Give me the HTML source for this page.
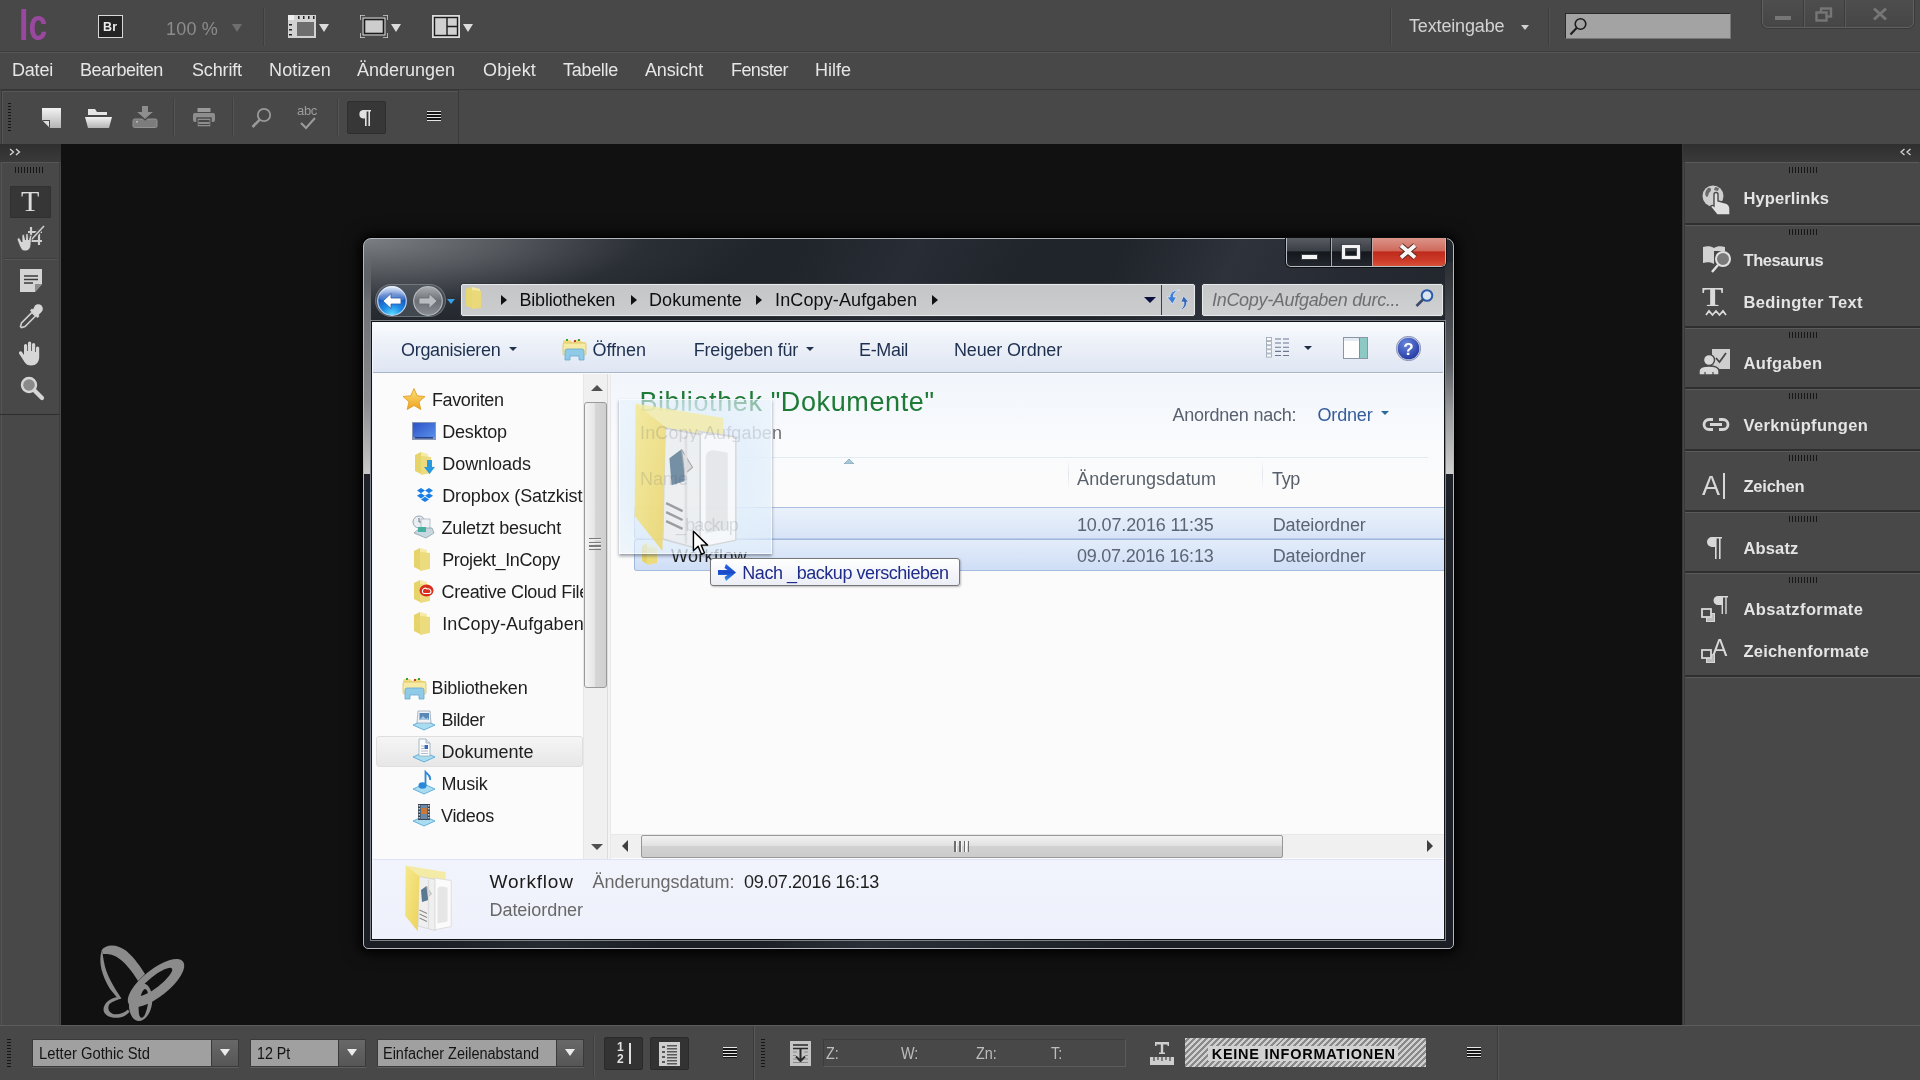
<!DOCTYPE html>
<html lang="de">
<head>
<meta charset="utf-8">
<title>InCopy</title>
<style>
*{box-sizing:border-box;margin:0;padding:0}
html,body{width:1920px;height:1080px;overflow:hidden;background:#111;font-family:"Liberation Sans","DejaVu Sans",sans-serif}
.abs,.abs *{position:absolute}
#app{position:absolute;left:0;top:0;width:1920px;height:1080px;overflow:hidden;will-change:transform}
#app div,#app span,#app svg{position:absolute}
.t{white-space:nowrap;line-height:1}
/* top bars */
#topbar{left:0;top:0;width:1920px;height:52px;background:#484848;border-bottom:1px solid #3c3c3c}
#menubar{left:0;top:52px;width:1920px;height:38px;background:#484848;border-top:1px solid #565656;border-bottom:1px solid #373737}
#toolbar{left:0;top:90px;width:1920px;height:54px;background:#484848}
.menu{top:8px;font-size:18px;color:#e6e6e6;letter-spacing:-0.2px}
.tri{width:0;height:0;border-style:solid;border-width:8px 5.5px 0 5.5px;border-color:#dcdcdc transparent transparent transparent}
.vsep{top:8px;width:2px;height:38px;background:#3f3f3f;border-right:1px solid #555}
/* left tools */
#ltools{left:0;top:144px;width:61px;height:881px;background:#484848}
/* right panels */
#rpanel{left:1683px;top:144px;width:237px;height:881px;background:#484848}
.plabel{font-size:16.5px;font-weight:bold;color:#e4e4e4;left:60.5px}
.grip{width:28px;height:6px;background:repeating-linear-gradient(90deg,#161616 0 1px,transparent 1px 3px)}
.psep{left:2px;width:235px;height:3px;background:#2f2f2f;border-bottom:1px solid #5a5a5a}
/* bottom bar */
#bottombar{left:0;top:1025px;width:1920px;height:55px;background:#484848;border-top:1px solid #5c5c5c}
.dd{top:13px;height:28px;background:#a0a0a0;border:1px solid #3a3a3a;box-shadow:0 1px 0 #5e5e5e}
.ddb{top:14px;width:27px;height:26px;background:linear-gradient(#686868,#565656);border-left:1px solid #3a3a3a}
.tri2{top:23px;width:0;height:0;border-style:solid;border-width:7.5px 5.75px 0 5.75px;border-color:#ececec transparent transparent transparent}
.ddt{top:20px;font-size:16px;color:#141414;transform-origin:0 0}
.inf{top:20px;font-size:16px;color:#bdbdbd;transform-origin:0 0;transform:scaleX(.9)}
/* explorer */
#win{left:363px;top:238px;width:1091px;height:711px;border-radius:8px 8px 3px 3px;background:#1b1e24;box-shadow:0 0 0 1px #0a0a0a, 0 0 18px 2px rgba(0,0,0,.8)}
.wtxt{font-size:17px;color:#1e1e1e}
</style>
</head>
<body>
<div id="app">

<!-- TOPBAR -->
<div id="topbar">
  <span class="t" style="left:19px;top:2px;font-size:45px;font-weight:bold;color:#9a479f;transform:scaleX(.75);transform-origin:0 0;letter-spacing:0px">Ic</span>
  <div style="left:98px;top:15px;width:25px;height:23px;border:1.5px solid #d8d8d8;background:#242424"></div>
  <span class="t" style="left:103px;top:20px;font-size:13.5px;font-weight:bold;color:#ececec;letter-spacing:.4px;transform:scaleX(.92);transform-origin:0 0">Br</span>
  <span class="t" style="left:166px;top:20px;font-size:18px;color:#8c8c8c;letter-spacing:.2px">100 %</span>
  <div class="tri" style="left:232px;top:24px;border-top-color:#6e6e6e"></div>
  <div style="left:263px;top:8px;width:1px;height:38px;background:#3e3e3e;border-right:1px solid #525252;width:2px"></div>
  <!-- view options icon -->
  <svg style="left:288px;top:15px" width="28" height="23" viewBox="0 0 28 23"><rect x="0" y="0" width="28" height="23" fill="#d2d2d2"/><rect x="9" y="7" width="17" height="14" fill="#6e6e6e"/><rect x="0" y="0" width="6" height="5" fill="#eee"/><g fill="#222"><rect x="10" y="1" width="1.5" height="3"/><rect x="15" y="1" width="1.5" height="3"/><rect x="20" y="1" width="1.5" height="3"/><rect x="25" y="1" width="1.5" height="3"/><rect x="1" y="9" width="3" height="1.5"/><rect x="1" y="14" width="3" height="1.5"/><rect x="1" y="19" width="3" height="1.5"/></g></svg>
  <div class="tri" style="left:319px;top:24px"></div>
  <!-- screen mode icon -->
  <svg style="left:360px;top:15px" width="28" height="23" viewBox="0 0 28 23"><path d="M0 5V0H5M23 0H28V5M28 18V23H23M5 23H0V18" fill="none" stroke="#cfcfcf" stroke-width="1.6"/><rect x="4.5" y="4.5" width="19" height="14" fill="#cdcdcd" stroke="#1c1c1c" stroke-width="1.6"/><rect x="3" y="3" width="22" height="17" fill="none" stroke="#d8d8d8" stroke-width="1"/></svg>
  <div class="tri" style="left:391px;top:24px"></div>
  <!-- arrange icon -->
  <svg style="left:432px;top:15px" width="28" height="23" viewBox="0 0 28 23"><rect x="0.5" y="0.5" width="27" height="22" fill="#d6d6d6" stroke="#dcdcdc"/><rect x="2.5" y="2.5" width="23" height="18" fill="#d0d0d0" stroke="#1c1c1c" stroke-width="1.4"/><path d="M15 2.5V20.5M15 11.5H25.5" stroke="#1c1c1c" stroke-width="1.4"/></svg>
  <div class="tri" style="left:463px;top:24px"></div>
  <!-- workspace -->
  <div style="left:1390px;top:8px;width:2px;height:38px;background:#3e3e3e;border-right:1px solid #525252"></div>
  <span class="t" style="left:1409px;top:17px;font-size:18px;color:#d2d2d2;letter-spacing:-.15px">Texteingabe</span>
  <div class="tri" style="left:1521px;top:25px;border-width:5px 4px 0 4px;border-top-color:#d0d0d0"></div>
  <div style="left:1548px;top:8px;width:2px;height:38px;background:#3e3e3e;border-right:1px solid #525252"></div>
  <div style="left:1565px;top:13px;width:166px;height:26px;background:#a3a3a3;border:1px solid #2a2a2a;border-right-color:#777;border-bottom-color:#777"></div>
  <svg style="left:1568px;top:15px" width="22" height="22" viewBox="0 0 22 22"><circle cx="12.5" cy="9" r="5.3" fill="none" stroke="#1c1c1c" stroke-width="1.6"/><path d="M8.6 13L2.5 19.5" stroke="#1c1c1c" stroke-width="2"/></svg>
  <!-- window buttons -->
  <div style="left:1762px;top:-4px;width:152px;height:32px;border:1px solid #606060;border-radius:0 0 6px 6px;background:linear-gradient(#4e4e4e,#464646);box-shadow:0 0 0 1px #3a3a3a"></div>
  <div style="left:1803px;top:0;width:1px;height:27px;background:#3c3c3c;border-right:1px solid #5a5a5a;width:2px"></div>
  <div style="left:1844px;top:0;width:2px;height:27px;background:#3c3c3c;border-right:1px solid #5a5a5a"></div>
  <div style="left:1775px;top:15.5px;width:16px;height:4.5px;background:#767676"></div>
  <svg style="left:1815px;top:7px" width="18" height="16" viewBox="0 0 18 16"><rect x="6" y="1.5" width="10" height="8" fill="none" stroke="#767676" stroke-width="2.4"/><rect x="1.5" y="5.5" width="10" height="8" fill="#484848" stroke="#767676" stroke-width="2.4"/></svg>
  <svg style="left:1872px;top:7px" width="16" height="14" viewBox="0 0 16 14"><path d="M2 1.5L14 12.5M14 1.5L2 12.5" stroke="#767676" stroke-width="3"/></svg>
</div>
<div id="menubar">
  <span class="t menu" style="left:12px;letter-spacing:-0.21px">Datei</span>
  <span class="t menu" style="left:80px;letter-spacing:-0.41px">Bearbeiten</span>
  <span class="t menu" style="left:192px;letter-spacing:-0.15px">Schrift</span>
  <span class="t menu" style="left:269px;letter-spacing:0.14px">Notizen</span>
  <span class="t menu" style="left:357px;letter-spacing:-0.01px">Änderungen</span>
  <span class="t menu" style="left:483px;letter-spacing:0.16px">Objekt</span>
  <span class="t menu" style="left:563px;letter-spacing:-0.29px">Tabelle</span>
  <span class="t menu" style="left:645px;letter-spacing:-0.15px">Ansicht</span>
  <span class="t menu" style="left:731px;letter-spacing:-0.58px">Fenster</span>
  <span class="t menu" style="left:815px;letter-spacing:-0.00px">Hilfe</span>
</div>
<div id="toolbar">
  <div style="left:1px;top:0;width:458px;height:54px;border:1px solid #3a3a3a;border-bottom:none;box-shadow:inset 1px 1px 0 #565656"></div>
  <div style="left:8px;top:13px;width:3px;height:29px;background:repeating-linear-gradient(180deg,#161616 0 1px,transparent 1px 3px)"></div>
  <!-- new -->
  <svg style="left:42px;top:108px;top:18px" width="19" height="20" viewBox="0 0 19 20"><defs><linearGradient id="gl" x1="0" y1="0" x2="0" y2="1"><stop offset="0" stop-color="#f2f2f2"/><stop offset="1" stop-color="#b4b4b4"/></linearGradient></defs><path d="M0 0H19V20H8L0 12Z" fill="url(#gl)"/><path d="M0 12H8V20Z" fill="#484848"/><path d="M1 13H7V19Z" fill="#dedede"/></svg>
  <!-- open -->
  <svg style="left:85px;top:19px" width="27" height="19" viewBox="0 0 27 19"><path d="M3 0H10L12 3H22V6H3Z" fill="#e6e6e6"/><path d="M0 8H27L24 19H3Z" fill="url(#gl)"/></svg>
  <!-- save (dim) -->
  <svg style="left:132px;top:16px" width="26" height="22" viewBox="0 0 26 22"><path d="M10 0H16V6H21L13 13L5 6H10Z" fill="#8e8e8e"/><rect x="1" y="13" width="24" height="8.5" rx="1.5" fill="#7c7c7c" stroke="#929292" stroke-width="1"/><path d="M5 7L13 14L21 7" fill="none" stroke="#484848" stroke-width="1.2"/><rect x="4" y="15" width="2" height="1.5" fill="#bbb"/></svg>
  <div class="vsep" style="left:173px"></div>
  <!-- print -->
  <svg style="left:193px;top:18px" width="22" height="19" viewBox="0 0 22 19"><rect x="4.5" y="0" width="13" height="4" fill="#9a9a9a"/><rect x="0" y="5" width="22" height="9" rx="2" fill="#8e8e8e"/><rect x="4" y="10" width="14" height="9" fill="#8e8e8e" stroke="#484848" stroke-width="1.4"/><rect x="5.5" y="12" width="11" height="5" fill="#484848"/><rect x="5.5" y="14" width="11" height="2" fill="#8e8e8e"/></svg>
  <div class="vsep" style="left:232px"></div>
  <!-- find -->
  <svg style="left:251px;top:17px" width="21" height="22" viewBox="0 0 21 22"><circle cx="13" cy="8" r="6.2" fill="none" stroke="#9a9a9a" stroke-width="1.8"/><path d="M8.8 12.6L1.5 20" stroke="#9a9a9a" stroke-width="2.6"/></svg>
  <!-- spellcheck -->
  <span class="t" style="left:297px;top:14px;font-size:13px;color:#9c9c9c;letter-spacing:-.3px">abc</span>
  <svg style="left:300px;top:27px" width="16" height="13" viewBox="0 0 16 13"><path d="M1 6L6 11L15 1" fill="none" stroke="#9c9c9c" stroke-width="2"/></svg>
  <div class="vsep" style="left:337px"></div>
  <!-- pilcrow -->
  <div style="left:347px;top:11px;width:39px;height:33px;background:#373737;border:1px solid #2e2e2e;border-radius:2px"></div>
  <svg style="left:358px;top:20px" width="14" height="16" viewBox="0 0 14 16"><path d="M6 0H13V1.6H12V16H10.4V1.6H8.6V16H7V8.5H5A4.3 4.3 0 0 1 5 0Z" fill="#e2e2e2"/></svg>
  <!-- panel menu -->
  <div style="left:427px;top:20.5px;width:14px;height:10.5px;background:repeating-linear-gradient(180deg,#e6e6e6 0 1.2px,#161616 1.2px 3.1px)"></div>
</div>

<!-- LEFT TOOLS -->
<div id="ltools">
  <div style="left:0;top:0;width:61px;height:18px;background:linear-gradient(#2f2f2f,#3a3a3a)"></div>
  <svg style="left:9px;top:4px" width="12" height="8" viewBox="0 0 12 8"><path d="M1 1L4.500 4L1 7M7 1L10.500 4L7 7" fill="none" stroke="#d4d4d4" stroke-width="1.300"/></svg>
  <div style="left:1px;top:18px;width:59px;height:863px;border-left:1px solid #545454;border-top:1px solid #565656;border-right:1px solid #3c3c3c"></div>
  <div class="grip" style="left:15px;top:23px"></div>
  <!-- T tool selected -->
  <div style="left:10px;top:42px;width:41px;height:32px;background:#363636;border:1px solid #303030;border-radius:1px"></div>
  <span class="t" style="left:21px;top:42px;font-size:30px;color:#dcdcdc;font-family:'Liberation Serif',serif">T</span>
  <!-- position tool -->
  <svg style="left:15px;top:80px" width="32" height="28" viewBox="0 0 32 28"><g fill="none" stroke="#d0d0d0" stroke-width="2.2"><path d="M13 8H27M16 3V17M13 17H27M24 5V21"/></g><path d="M28 3L17 15" stroke="#484848" stroke-width="4"/><path d="M29 2L16 16" stroke="#d0d0d0" stroke-width="1.6"/><path d="M2 15L4 13.5L7 18V11L9 10L10.5 16L11 9.5L13 9.5L13.5 16L15 11L16.8 11.5L16 19C16 24 14 27 10 27C6 27 5 23 2 15Z" fill="#d6d6d6" stroke="#484848" stroke-width=".8"/></svg>
  <div style="left:4px;top:114px;width:53px;height:2px;background:#3e3e3e;border-bottom:1px solid #565656"></div>
  <!-- note tool -->
  <svg style="left:20px;top:125px" width="22" height="23" viewBox="0 0 22 23"><path d="M0 0H22V15L15 23H0Z" fill="#d4d4d4"/><path d="M22 15H15V23Z" fill="#8c8c8c"/><g stroke="#3a3a3a" stroke-width="1.6"><path d="M4 7H18M4 10.5H18M4 14H13"/></g></svg>
  <!-- eyedropper -->
  <svg style="left:19px;top:160px" width="24" height="25" viewBox="0 0 24 25"><path d="M16 1.5A3.2 3.2 0 0 1 22.5 8L19.5 11L20.5 12L18.5 14L11 6.500L13 4.500L14 5.500Z" fill="#d6d6d6"/><path d="M13 8.500L16.500 12L6 22.500L2.500 23.500L1.500 22.500L2.500 19Z" fill="none" stroke="#d0d0d0" stroke-width="1.6"/></svg>
  <!-- hand -->
  <svg style="left:17px;top:196px" width="26" height="26" viewBox="0 0 26 26"><path d="M7 15V5.500A1.600 1.600 0 0 1 10.200 5.500V11H11V3A1.600 1.600 0 0 1 14.200 3V11H15V4.500A1.600 1.600 0 0 1 18.200 4.500V12H19V8A1.600 1.600 0 0 1 22.200 8V17C22.200 22 19 25.500 14 25.500C9 25.500 7.500 22 5 18L2 13.500A1.700 1.700 0 0 1 4.800 11.800Z" fill="#d6d6d6"/></svg>
  <div style="left:0;top:269.5px;width:59px;height:1.5px;background:#2e2e2e"></div>
  <!-- zoom -->
  <svg style="left:20px;top:232px" width="25" height="25" viewBox="0 0 25 25"><circle cx="9" cy="9" r="7" fill="#8a8a8a" stroke="#d6d6d6" stroke-width="2.4"/><path d="M14.500 14.500L22 22" stroke="#d6d6d6" stroke-width="4.200" stroke-linecap="round"/></svg>
</div>

<!-- RIGHT PANEL -->
<div id="rpanel">
  <div style="left:-1px;top:0;width:1px;height:881px;background:#383838"></div>
  <div style="left:0;top:0;width:237px;height:18px;background:linear-gradient(#2f2f2f,#3a3a3a)"></div>
  <svg style="left:217px;top:4px" width="12" height="8" viewBox="0 0 12 8"><path d="M4.500 1L1 4L4.500 7M10.500 1L7 4L10.500 7" fill="none" stroke="#d4d4d4" stroke-width="1.300"/></svg>
  <div style="left:1px;top:18px;width:235px;height:863px;border-left:1px solid #3a3a3a"></div>
  <div style="left:2px;top:18px;width:234px;height:1px;background:#5a5a5a"></div>
  <div class="grip" style="left:106px;top:23.0px"></div>
  <div class="psep" style="top:78.5px"></div>
  <div class="grip" style="left:106px;top:84.5px"></div>
  <div class="psep" style="top:181.5px"></div>
  <div class="grip" style="left:106px;top:187.5px"></div>
  <div class="psep" style="top:242.5px"></div>
  <div class="grip" style="left:106px;top:248.5px"></div>
  <div class="psep" style="top:304.5px"></div>
  <div class="grip" style="left:106px;top:310.5px"></div>
  <div class="psep" style="top:366.0px"></div>
  <div class="grip" style="left:106px;top:372.0px"></div>
  <div class="psep" style="top:427.0px"></div>
  <div class="grip" style="left:106px;top:433.0px"></div>
  <div class="psep" style="top:530.5px"></div>
  <span class="t plabel" style="top:46.0px;letter-spacing:0.12px">Hyperlinks</span>
  <span class="t plabel" style="top:108.0px;letter-spacing:-0.41px">Thesaurus</span>
  <span class="t plabel" style="top:150.0px;letter-spacing:0.37px">Bedingter Text</span>
  <span class="t plabel" style="top:211.0px;letter-spacing:0.36px">Aufgaben</span>
  <span class="t plabel" style="top:273.0px;letter-spacing:0.35px">Verknüpfungen</span>
  <span class="t plabel" style="top:334.0px;letter-spacing:-0.23px">Zeichen</span>
  <span class="t plabel" style="top:395.8px;letter-spacing:0.15px">Absatz</span>
  <span class="t plabel" style="top:457.0px;letter-spacing:0.40px">Absatzformate</span>
  <span class="t plabel" style="top:498.8px;letter-spacing:0.20px">Zeichenformate</span>
  <!-- hyperlinks -->
  <svg style="left:19px;top:40px" width="31" height="32" viewBox="0 0 31 32"><circle cx="11" cy="12" r="10.500" fill="#cfcfcf"/><path d="M6 4C9 3 10 6 8 8C6 9 7 12 5 13C3 12 2 8 6 4ZM13 3L17 4L16 7L12 6Z" fill="#6a6a6a"/><path d="M12 22V10.500A2 2 0 0 1 16 10.500V17L24 19C27 20 28 22 28 25V31H15L9 23.500C8 22 10 20.500 12 22Z" fill="#e0e0e0" stroke="#484848" stroke-width="1.400"/></svg>
  <!-- thesaurus -->
  <svg style="left:19px;top:102px" width="31" height="29" viewBox="0 0 31 29"><path d="M1 1C5 0 9 0 12 2C15 0 19 0 23 1V5H12V18C9 16 5 16 1 17Z" fill="#d2d2d2"/><circle cx="21" cy="13" r="7" fill="#7a7a7a" stroke="#e2e2e2" stroke-width="2"/><path d="M16 19L10 26" stroke="#e2e2e2" stroke-width="2.400"/></svg>
  <!-- bedingter text -->
  <span class="t" style="left:19px;top:140px;font-size:32px;color:#dadada;font-family:'Liberation Serif',serif;font-weight:bold;transform:scaleY(.82);transform-origin:0 0">T</span>
  <svg style="left:22px;top:165px" width="22" height="8" viewBox="0 0 22 8"><path d="M1 6L4 2L7.500 6L11 2L14.500 6L18 2L21 6" fill="none" stroke="#dadada" stroke-width="1.800"/></svg>
  <!-- aufgaben -->
  <svg style="left:16px;top:204px" width="32" height="28" viewBox="0 0 32 28"><rect x="13" y="1" width="18" height="20" fill="#cfcfcf"/><path d="M17 10L20.500 14L27 5" fill="none" stroke="#484848" stroke-width="1.800"/><circle cx="10" cy="12" r="5.500" fill="#d8d8d8" stroke="#484848" stroke-width="1.400"/><path d="M0 27V23C0 19 4 18 10 18C16 18 20 19 20 23V27Z" fill="#d8d8d8" stroke="#484848" stroke-width="1.400"/><path d="M6 27V24M14 27V24" stroke="#484848" stroke-width="1.200"/></svg>
  <!-- verknuepfungen -->
  <svg style="left:19px;top:273px" width="28" height="15" viewBox="0 0 28 15"><path d="M11 2.500H7A5 5 0 0 0 7 12.500H11M17 2.500H21A5 5 0 0 1 21 12.500H17M8 7.500H20" fill="none" stroke="#d6d6d6" stroke-width="2.800"/></svg>
  <!-- zeichen -->
  <span class="t" style="left:19px;top:329px;font-size:27px;color:#d8d8d8">A</span>
  <div style="left:40px;top:329px;width:1.500px;height:26px;background:#d8d8d8"></div>
  <!-- absatz -->
  <svg style="left:22px;top:393px" width="17" height="22" viewBox="0 0 17 22"><path d="M7 0H17V1.600H15.600V22H14V1.600H11.600V22H10V10H7A5 5 0 0 1 7 0Z" fill="#d8d8d8"/></svg>
  <!-- absatzformate -->
  <svg style="left:18px;top:452px" width="28" height="27" viewBox="0 0 28 27"><path d="M17 0H27V1.500H25.700V18H24.300V1.500H22V18H20.600V9H17A4.500 4.500 0 0 1 17 0Z" fill="#d8d8d8"/><rect x="5.500" y="17.500" width="8" height="8" fill="#bcbcbc" stroke="#d8d8d8" stroke-width="1"/><rect x="1" y="13" width="9" height="8" fill="#484848" stroke="#d8d8d8" stroke-width="1.800"/></svg>
  <!-- zeichenformate -->
  <span class="t" style="left:29px;top:493px;font-size:23px;color:#d8d8d8">A</span>
  <svg style="left:18px;top:504px" width="16" height="16" viewBox="0 0 16 16"><rect x="5.500" y="6.500" width="8" height="8" fill="#bcbcbc" stroke="#d8d8d8" stroke-width="1"/><rect x="1" y="2" width="9" height="8" fill="#484848" stroke="#d8d8d8" stroke-width="1.800"/></svg>
</div>

<!-- BOTTOM BAR -->
<div id="bottombar">
  <div style="left:7px;top:13px;width:4px;height:29px;background:repeating-linear-gradient(180deg,#161616 0 1px,transparent 1px 3px)"></div>
  <!-- dd1 -->
  <div class="dd" style="left:32px;width:207px"></div><div class="ddb" style="left:211px"></div><div class="tri2" style="left:220px"></div>
  <span class="t ddt" style="left:38.5px;transform:scaleX(0.924)">Letter Gothic Std</span>
  <!-- dd2 -->
  <div class="dd" style="left:250px;width:116px"></div><div class="ddb" style="left:338px"></div><div class="tri2" style="left:347px"></div>
  <span class="t ddt" style="left:256.75px;transform:scaleX(0.890)">12 Pt</span>
  <!-- dd3 -->
  <div class="dd" style="left:377px;width:207px"></div><div class="ddb" style="left:556px"></div><div class="tri2" style="left:565px"></div>
  <span class="t ddt" style="left:383px;transform:scaleX(0.904)">Einfacher Zeilenabstand</span>
  <div class="vsep" style="left:593px;top:9px;height:42px"></div>
  <!-- line numbers button -->
  <div style="left:604px;top:11px;width:39px;height:33px;background:#333;border:1px solid #2a2a2a;border-radius:2px"></div>
  <span class="t" style="left:617px;top:15px;font-size:12px;color:#e0e0e0;font-weight:bold">1</span>
  <span class="t" style="left:617px;top:27px;font-size:12px;color:#e0e0e0;font-weight:bold">2</span>
  <div style="left:629px;top:17px;width:1.5px;height:21px;background:#e0e0e0"></div>
  <!-- list button -->
  <div style="left:650px;top:11px;width:39px;height:33px;background:#333;border:1px solid #2a2a2a;border-radius:2px"></div>
  <svg style="left:659px;top:16px" width="21" height="24" viewBox="0 0 21 24"><rect width="21" height="24" fill="#cfcfcf"/><g fill="#5a5a5a"><rect x="3" y="4" width="3" height="2"/><rect x="3" y="9" width="3" height="2"/><rect x="3" y="14" width="3" height="2"/><rect x="3" y="19" width="3" height="2"/><rect x="8" y="3" width="10" height="1.5"/><rect x="8" y="6" width="10" height="1.5"/><rect x="8" y="9" width="10" height="1.5"/><rect x="8" y="12" width="10" height="1.5"/><rect x="8" y="15" width="10" height="1.5"/><rect x="8" y="18" width="10" height="1.5"/><rect x="8" y="21" width="10" height="1.5"/></g></svg>
  <div style="left:722.5px;top:21px;width:14.5px;height:10.5px;background:repeating-linear-gradient(180deg,#e6e6e6 0 1.2px,#161616 1.2px 3.1px)"></div>
  <div style="left:753px;top:0;width:2px;height:55px;background:#3a3a3a;border-right:1px solid #585858"></div>
  <div style="left:761px;top:13px;width:4px;height:29px;background:repeating-linear-gradient(180deg,#161616 0 1px,transparent 1px 3px)"></div>
  <!-- arrow down icon -->
  <svg style="left:790px;top:15px" width="21" height="25" viewBox="0 0 21 25"><rect width="21" height="25" fill="#c4c4c4"/><g fill="none" stroke="#2a2a2a" stroke-width="1.5"><path d="M3 4H18M3 7.500H18"/><path d="M10.500 7V20M6 15.500L10.500 20L15 15.500" stroke-width="2"/></g><path d="M3 11H7M14 11H18M3 14.500H6M15 14.500H18M3 18H7M14 18H18M3 21.500H18" stroke="#8a8a8a" stroke-width="1.200"/></svg>
  <div style="left:823px;top:13px;width:303px;height:28px;background:#484848;border:1px solid #3c3c3c;border-bottom-color:#5c5c5c;border-right-color:#5a5a5a"></div>
  <span class="t inf" style="left:826px">Z:</span><span class="t inf" style="left:901px">W:</span><span class="t inf" style="left:976px">Zn:</span><span class="t inf" style="left:1051px">T:</span>
  <!-- T ruler icon -->
  <svg style="left:1149px;top:16px" width="26" height="24" viewBox="0 0 26 24"><path d="M6 0H20V4H18.500V2.500H14.200V10.500H16V12H10V10.500H11.800V2.500H7.500V4H6Z" fill="#cfcfcf"/><rect x="1" y="15" width="24" height="8" fill="#cfcfcf"/><g stroke="#484848" stroke-width="1.200"><path d="M5 15V19M9 15V18M13 15V19M17 15V18M21 15V19"/></g></svg>
  <!-- keine informationen -->
  <div style="left:1184.5px;top:12px;width:241.5px;height:29px;background:repeating-linear-gradient(135deg,#d0d0d0 0 2.1px,#8a8a8a 2.1px 4.2px)"></div>
  <div style="left:1207.5px;top:19.5px;width:190.5px;height:15px;background:#d2d2d2"></div>
  <span class="t" style="left:1211.7px;top:21px;font-size:14.5px;font-weight:bold;color:#050505;letter-spacing:.75px">KEINE INFORMATIONEN</span>
  <div style="left:1467px;top:21px;width:14.2px;height:10.5px;background:repeating-linear-gradient(180deg,#e6e6e6 0 1.2px,#161616 1.2px 3.1px)"></div>
  <div style="left:1497px;top:0;width:2px;height:55px;background:#3a3a3a;border-right:1px solid #545454"></div>
</div>

<!-- WATERMARK -->
<svg style="left:80px;top:930px" width="120" height="100" viewBox="0 0 120 100"><g fill="#8b8b8b">
<path d="M21.800 20C26 13.500 38 14 46.500 21C55 28.500 61 37.500 65 44L58 51C52 41 44 31 36 26.500C31 24 26 24 23 24Z"/>
<path d="M21.800 20C18 32 22 46 30 59L37 67.500L41.500 68.500C33 56 26 44 24 32C23 27 22.500 23 22.500 21Z"/>
<path d="M38 67C30 68 23.500 73 23.500 80C24.500 86.500 32 88.500 40 87.500C44 87 47 84.500 49.500 82L48 79.500C44 83.500 38 85 33 84C28 82 27 77 30 73.500C33 71 37 70 41.500 68.500Z"/>
<path fill-rule="evenodd" transform="rotate(8 60 73)" d="M49.0 72A11.5 19 0 1 0 72.0 72A11.5 19 0 1 0 49.0 72ZM59.0 73A4.5 14.5 0 1 0 68.0 73A4.5 14.5 0 1 0 59.0 73Z"/>
<path fill-rule="evenodd" transform="rotate(-38.5 76 53)" d="M41.5 53A34.5 13.5 0 1 0 110.5 53A34.5 13.5 0 1 0 41.5 53ZM54.5 51.5A21.5 5.5 0 1 0 97.5 51.5A21.5 5.5 0 1 0 54.5 51.5Z"/>
</g></svg>
<!-- EXPLORER WINDOW -->
<div id="win">
<div style="left:0;top:0;width:1091px;height:711px;border-radius:8px 8px 5px 5px;border:1px solid #b4b7bb;background:radial-gradient(ellipse 400px 95px at 0 0,rgba(128,131,135,.95) 0%,rgba(98,102,107,.8) 35%,rgba(54,58,65,.45) 70%,rgba(24,27,33,0) 100%),linear-gradient(118deg,rgba(0,0,0,0) 30%,rgba(50,56,66,.45) 38%,rgba(0,0,0,0) 46%,rgba(0,0,0,0) 52%,rgba(56,62,72,.55) 60%,rgba(46,52,62,.45) 68%,rgba(0,0,0,0) 80%),linear-gradient(180deg,#20242b 0%,#1b1e24 100%);box-shadow:0 0 0 1px rgba(0,0,0,.7),0 1px 10px 2px rgba(0,0,0,.75)"></div>
<div style="left:1082.0px;top:24.0px;width:7.5px;height:211.5px;background:linear-gradient(180deg,#2a2d32 0%,#5c5f64 48%,#9c9d9f 72%,#cfcfcf 100%)"></div>
<div style="left:1.0px;top:8.0px;width:7.0px;height:227.5px;background:linear-gradient(180deg,rgba(125,128,132,0) 0%,#6c6f73 24%,#8a8b8d 68%,#c9c9c9 100%)"></div>
<div style="left:923.0px;top:0.0px;width:160.0px;height:29.0px;border:1px solid #b9bcc0;border-top:none;border-radius:0 0 5px 5px;background:linear-gradient(180deg,#595d63 0%,#3a3e45 45%,#14171c 50%,#23272e 100%);box-shadow:0 0 0 1px #0c0e11"></div>
<div style="left:1009.0px;top:0.0px;width:73.0px;height:28.0px;border-radius:0 0 4px 0;background:linear-gradient(180deg,#dc9488 0%,#cf6a5c 45%,#bf2a1c 50%,#cc3a28 80%,#d8523a 100%)"></div>
<div style="left:967.0px;top:0.0px;width:2.0px;height:28.0px;background:#15181c;border-right:1px solid #a8abb0"></div>
<div style="left:1007.5px;top:0.0px;width:2.0px;height:28.0px;background:#15181c;border-right:1px solid #c9a8a4"></div>
<div style="left:937.5px;top:16.0px;width:17.0px;height:5.5px;background:#f4f4f4;border:1px solid #3a3d42;border-radius:1px"></div>
<svg style="left:978px;top:6px" width="20" height="16" viewBox="0 0 20 16"><rect x="2.5" y="2.5" width="15" height="11" fill="none" stroke="#30343a" stroke-width="5"/><rect x="2.500" y="2.500" width="15" height="11" fill="none" stroke="#f4f4f4" stroke-width="3.200"/></svg>
<svg style="left:1035px;top:5px" width="20" height="17" viewBox="0 0 20 17"><path d="M3 2.500L17 14.500M17 2.500L3 14.500" stroke="#5a2a24" stroke-width="5.600"/><path d="M3 2.500L17 14.500M17 2.500L3 14.500" stroke="#f6f6f6" stroke-width="3.800"/></svg>
<div style="left:12.0px;top:46.0px;width:71.0px;height:33.0px;border-radius:17px;background:rgba(90,96,104,.55);border:1px solid rgba(150,156,164,.5)"></div>
<svg style="left:14px;top:47.5px" width="30" height="30" viewBox="0 0 30 30"><defs><radialGradient id="bk" cx=".5" cy="1" r="1"><stop offset="0" stop-color="#5fe0ff"/><stop offset=".35" stop-color="#1f8fe8"/><stop offset=".75" stop-color="#1a4fb8"/><stop offset="1" stop-color="#7fa8e8"/></radialGradient><linearGradient id="sh" x1="0" y1="0" x2="0" y2="1"><stop offset="0" stop-color="#fff" stop-opacity=".75"/><stop offset="1" stop-color="#fff" stop-opacity=".1"/></linearGradient></defs><circle cx="15" cy="15" r="14.300" fill="url(#bk)" stroke="#bcd4f4" stroke-width="1.200"/><path d="M2 13A13 13 0 0 1 28 13C22 16 8 16 2 13Z" fill="url(#sh)"/><path d="M6 15L14 7.500V12H24V18H14V22.500Z" fill="#fff" stroke="#2a58a8" stroke-width=".8"/></svg>
<svg style="left:50px;top:47.5px" width="30" height="30" viewBox="0 0 30 30"><defs><linearGradient id="fw" x1="0" y1="0" x2="0" y2="1"><stop offset="0" stop-color="#a9acb0"/><stop offset=".5" stop-color="#6c7076"/><stop offset="1" stop-color="#8a8e94"/></linearGradient></defs><circle cx="15" cy="15" r="14.300" fill="url(#fw)" stroke="#b4b8bd" stroke-width="1.200"/><path d="M24 15L16 7.500V12H6V18H16V22.500Z" fill="#b9bcc0" stroke="#6a6e74" stroke-width=".8"/></svg>
<div style="left:84.0px;top:60.5px;width:0;height:0;border-style:solid;border-width:5px 4.5px 0 4.5px;border-color:#3aa0e8 transparent transparent transparent"></div>
<div style="left:98.0px;top:46.0px;width:733.5px;height:31.5px;background:linear-gradient(180deg,#c5c6c8,#cbcccd);border:1px solid #e8e9ea;box-shadow:0 0 0 1px #32363c;border-radius:2px"></div>
<div style="left:798.0px;top:47.0px;width:1.0px;height:29.5px;background:#3c4046"></div>
<div style="left:838.5px;top:46.0px;width:241.0px;height:31.5px;background:linear-gradient(180deg,#c6c7c9,#d0d1d2);border:1px solid #e8e9ea;box-shadow:0 0 0 1px #32363c;border-radius:2px"></div>
<svg style="left:102px;top:49px" width="18" height="23" viewBox="0 0 18 23"><path d="M1 2L7 0V21L1 19Z" fill="#e8d873"/><path d="M7 0L15 2V20L7 21Z" fill="#f3e9a0"/><path d="M7 3L16 4V21L7 22Z" fill="#ead97a"/></svg>
<div style="left:137.6px;top:57.0px;width:0;height:0;border-style:solid;border-width:5.5px 0 5.5px 6.5px;border-color:transparent transparent transparent #111"></div>
<div style="left:267.5px;top:57.0px;width:0;height:0;border-style:solid;border-width:5.5px 0 5.5px 6.5px;border-color:transparent transparent transparent #111"></div>
<div style="left:393.0px;top:57.0px;width:0;height:0;border-style:solid;border-width:5.5px 0 5.5px 6.5px;border-color:transparent transparent transparent #111"></div>
<div style="left:568.5px;top:57.0px;width:0;height:0;border-style:solid;border-width:5.5px 0 5.5px 6.5px;border-color:transparent transparent transparent #111"></div>
<div style="left:781.0px;top:58.5px;width:0;height:0;border-style:solid;border-width:6.5px 6.0px 0 6.0px;border-color:#0c1040 transparent transparent transparent"></div>
<svg style="left:802px;top:50px" width="26" height="24" viewBox="0 0 26 24"><path d="M15 2C10 3 8 6 8.500 9L11.500 9L7.500 16L2 9L5 9C4.500 5 9 1.500 15 2Z" fill="#3f7ed8" stroke="#dbe8f8" stroke-width=".8"/><path d="M15 22C18 20 19.500 17 19 14L16 14L18.500 8L23.500 14L21.500 14C22 18 19 21 15 22Z" fill="#3466b4" stroke="#dbe8f8" stroke-width=".6"/></svg>
<svg style="left:1052px;top:50px" width="20" height="20" viewBox="0 0 20 20"><circle cx="12" cy="7.500" r="5.300" fill="#d8e4f0" stroke="#2a5aa8" stroke-width="2"/><path d="M8 11.500L1.500 18" stroke="#3a4a68" stroke-width="2.600"/></svg>
<div style="left:7.0px;top:82.0px;width:1076.0px;height:621.0px;background:#101216;border:1px solid #80858b"></div>
<div style="left:9.0px;top:84.0px;width:1072.0px;height:617.0px;background:#fbfbfb;border:1px solid #f4f7fb"></div>
<div style="left:10.0px;top:85.0px;width:1070.0px;height:50.0px;background:linear-gradient(180deg,#fafcfe 0%,#eef2f9 35%,#dfe6f3 100%);border-bottom:1px solid #a9b4c8"></div>
<div style="left:145.5px;top:108.5px;width:0;height:0;border-style:solid;border-width:4.5px 4.0px 0 4.0px;border-color:#24344e transparent transparent transparent"></div>
<div style="left:442.5px;top:108.5px;width:0;height:0;border-style:solid;border-width:4.5px 4.0px 0 4.0px;border-color:#24344e transparent transparent transparent"></div>
<svg style="left:199px;top:98.5px" width="25" height="24" viewBox="0 0 25 24"><path d="M1 5Q1 3 3 3H8L10 5H13V8H1Z" fill="#f2dc82"/><path d="M11 5Q11 3 13 3H18L20 5H23Q24 5 24 7V10H11Z" fill="#f2dc82"/><rect x="1" y="6" width="23" height="12" rx="1.500" fill="#f6eaa4" stroke="#d8c060" stroke-width=".8"/><path d="M3 23V14Q3 12 5 12H20Q22 12 22 14V23H17V19H8V23Z" fill="#8fcbe8" stroke="#6aa8cc" stroke-width=".8"/><rect x="4" y="2" width="2" height="2" fill="#3aa03a"/><rect x="12" y="3" width="2" height="2" fill="#c8402a"/><rect x="16" y="2" width="2" height="2" fill="#3aa03a"/></svg>
<svg style="left:903px;top:99px" width="24" height="21" viewBox="0 0 24 21"><g fill="#fafafa" stroke="#9aa4b4" stroke-width=".8"><rect x=".5" y=".5" width="5" height="3.200"/><rect x=".5" y="4.600" width="5" height="3.200"/><rect x=".5" y="8.700" width="5" height="3.200"/><rect x=".5" y="12.800" width="5" height="3.200"/><rect x=".5" y="16.900" width="5" height="3.200"/></g><g stroke="#6a7890" stroke-width="1.100"><path d="M9 2H15M17 2H23M9 6H15M17 6H23M9 10.200H15M17 10.200H23M9 14.400H15M17 14.400H23M9 18.500H15M17 18.500H23"/></g></svg>
<div style="left:940.5px;top:108.0px;width:0;height:0;border-style:solid;border-width:4.5px 4.0px 0 4.0px;border-color:#1e2c44 transparent transparent transparent"></div>
<svg style="left:980px;top:99px" width="25" height="22" viewBox="0 0 25 22"><rect x=".5" y=".5" width="24" height="21" fill="#fdfdfd" stroke="#8a96a8"/><rect x="1" y="1" width="23" height="3" fill="#e4eaf2"/><rect x="16.500" y="1" width="7.500" height="20" fill="#8cc8c4"/><path d="M16.500 1V21" stroke="#6a98a8"/></svg>
<svg style="left:1033px;top:97.5px" width="25" height="25" viewBox="0 0 25 25"><defs><radialGradient id="hp" cx=".4" cy=".3" r=".8"><stop offset="0" stop-color="#6a88e0"/><stop offset="1" stop-color="#1a2e98"/></radialGradient></defs><circle cx="12.500" cy="12.500" r="11.500" fill="url(#hp)" stroke="#c8d0e8" stroke-width="1.400"/><circle cx="12.500" cy="12.500" r="12.200" fill="none" stroke="#5a6890" stroke-width=".6"/><text x="12.500" y="18.500" text-anchor="middle" font-family="Liberation Sans" font-weight="bold" font-size="17" fill="#fff">?</text></svg>
<div style="left:10.0px;top:136.0px;width:210.0px;height:485.0px;background:#fbfbfb"></div>
<div style="left:220.0px;top:136.0px;width:24.0px;height:485.0px;background:#f0f0f0;border-left:1px solid #e6e6e6"></div>
<div style="left:244.0px;top:136.0px;width:4.0px;height:485.0px;background:#f3f3f3;border-left:1px solid #dcdcdc;border-right:1px solid #e8e8e8"></div>
<svg style="left:227.5px;top:147px" width="12" height="6" viewBox="0 0 12 6"><path d="M0 6L6 0L12 6Z" fill="#505050"/></svg>
<svg style="left:227.5px;top:605.5px" width="12" height="6" viewBox="0 0 12 6"><path d="M0 0L6 6L12 0Z" fill="#505050"/></svg>
<div style="left:221.0px;top:163.5px;width:22.5px;height:286.0px;background:linear-gradient(90deg,#f4f4f4 0%,#e6e6e6 45%,#d6d6d6 50%,#cfcfcf 100%);border:1px solid #9a9a9a;border-radius:3px"></div>
<div style="left:226.0px;top:299.5px;width:12.0px;height:12.5px;background:repeating-linear-gradient(180deg,#7a7a7a 0 1.3px,#f0f0f0 1.3px 2.400px,transparent 2.400px 3.600px)"></div>
<div style="left:12.5px;top:497.5px;width:207.0px;height:31.0px;background:linear-gradient(180deg,#f5f5f5,#e7e7e7);border:1px solid #dfdfdf;border-radius:3px"></div>
<svg style="left:39px;top:149.5px" width="24" height="22" viewBox="0 0 24 22"><defs><linearGradient id="st" x1="0" y1="0" x2="0" y2="1"><stop offset="0" stop-color="#fbe27a"/><stop offset="1" stop-color="#f0a21c"/></linearGradient></defs><path d="M12 .5L15.200 7.800L23 8.500L17 13.800L18.800 21.500L12 17.500L5.200 21.500L7 13.800L1 8.500L8.800 7.800Z" fill="url(#st)" stroke="#e0961c" stroke-width=".8"/></svg>
<svg style="left:49px;top:184px" width="24" height="18" viewBox="0 0 24 18"><defs><linearGradient id="dk" x1="0" y1="0" x2="1" y2="1"><stop offset="0" stop-color="#2c52c8"/><stop offset="1" stop-color="#5a90e8"/></linearGradient></defs><rect width="24" height="18" fill="#8a98b8"/><rect x="1" y="1" width="22" height="14.500" fill="url(#dk)"/><rect x="3" y="15" width="18" height="1.500" fill="#27408c"/></svg>
<svg style="left:51px;top:213.5px" width="19" height="23" viewBox="0 0 19 23"><path d="M1 3L7 0V22L1 19Z" fill="#e6d36a"/><path d="M7 0L14 2V20L7 22Z" fill="#f5eba6"/><path d="M7 4L17 5V21L7 23Z" fill="#ecdc7e"/></svg>
<svg style="left:61px;top:222px" width="11" height="14" viewBox="0 0 11 14"><path d="M3 0H8V7H11L5.500 14L0 7H3Z" fill="#2a9ae0"/></svg>
<svg style="left:53.5px;top:250px" width="16" height="15" viewBox="0 0 16 15"><g fill="#1a7fe4"><path d="M4 0L8 2.600L4 5.200L0 2.600Z"/><path d="M12 0L16 2.600L12 5.200L8 2.600Z"/><path d="M4 5.200L8 7.800L4 10.400L0 7.800Z"/><path d="M12 5.200L16 7.800L12 10.400L8 7.800Z"/><path d="M4 11.400L8 8.800L12 11.400L8 14Z"/></g></svg>
<svg style="left:49px;top:277px" width="23" height="24" viewBox="0 0 23 24"><circle cx="7" cy="7" r="6" fill="#e8eef2" stroke="#98a4b0"/><path d="M7 3V7H10" stroke="#687480" fill="none"/><rect x="9" y="4" width="9" height="12" fill="#eef2f6" stroke="#a8b4c0" stroke-width=".8"/><path d="M2 18L8 13H20L22 18L14 23Z" fill="#c8d8e0" stroke="#90a0a8" stroke-width=".8"/><rect x="6" y="12" width="8" height="5" fill="#48b0a0"/></svg>
<svg style="left:50px;top:309.5px" width="19" height="23" viewBox="0 0 19 23"><path d="M1 3L7 0V22L1 19Z" fill="#e6d36a"/><path d="M7 0L14 2V20L7 22Z" fill="#f5eba6"/><path d="M7 4L17 5V21L7 23Z" fill="#ecdc7e"/></svg>
<svg style="left:50px;top:341.5px" width="19" height="23" viewBox="0 0 19 23"><path d="M1 3L7 0V22L1 19Z" fill="#e6d36a"/><path d="M7 0L14 2V20L7 22Z" fill="#f5eba6"/><path d="M7 4L17 5V21L7 23Z" fill="#ecdc7e"/></svg>
<svg style="left:56px;top:345.5px" width="15" height="13" viewBox="0 0 15 13"><ellipse cx="7.500" cy="6.500" rx="7" ry="6" fill="#d8301c"/><path d="M3.500 7A2.600 2.600 0 0 1 8 5A3 3 0 0 1 12 8A2 2 0 0 1 10 9.500H5A2 2 0 0 1 3.500 7Z" fill="none" stroke="#fff" stroke-width="1.100"/></svg>
<svg style="left:50px;top:373.5px" width="19" height="23" viewBox="0 0 19 23"><path d="M1 3L7 0V22L1 19Z" fill="#e6d36a"/><path d="M7 0L14 2V20L7 22Z" fill="#f5eba6"/><path d="M7 4L17 5V21L7 23Z" fill="#ecdc7e"/></svg>
<svg style="left:38.5px;top:437.5px" width="25" height="24" viewBox="0 0 25 24"><path d="M1 5Q1 3 3 3H8L10 5H13V8H1Z" fill="#f2dc82"/><path d="M11 5Q11 3 13 3H18L20 5H23Q24 5 24 7V10H11Z" fill="#f2dc82"/><rect x="1" y="6" width="23" height="12" rx="1.500" fill="#f6eaa4" stroke="#d8c060" stroke-width=".8"/><path d="M3 23V14Q3 12 5 12H20Q22 12 22 14V23H17V19H8V23Z" fill="#8fcbe8" stroke="#6aa8cc" stroke-width=".8"/><rect x="4" y="2" width="2" height="2" fill="#3aa03a"/><rect x="12" y="3" width="2" height="2" fill="#c8402a"/><rect x="16" y="2" width="2" height="2" fill="#3aa03a"/></svg>
<svg style="left:49px;top:470px" width="24" height="23" viewBox="0 0 24 23"><path d="M1 17L12 12L23 17L12 22Z" fill="#a8dcf0" stroke="#5aaad8" stroke-width=".9"/><path d="M6 3H18L19 15H5Z" fill="#eef2f6" stroke="#98a8b8" stroke-width=".8"/><rect x="7.500" y="5" width="9.500" height="7" fill="#5888b8"/><path d="M7.500 12L11 8L14 11L15.500 9.500L17 12Z" fill="#a8c8e0"/></svg>
<svg style="left:49px;top:500px" width="24" height="25" viewBox="0 0 24 25"><path d="M1 19L12 14L23 19L12 24Z" fill="#a8dcf0" stroke="#5aaad8" stroke-width=".9"/><path d="M7 1H14L18 5V18H7Z" fill="#fafcfe" stroke="#98a8b8" stroke-width=".8"/><path d="M14 1V5H18" fill="#dde4ec" stroke="#98a8b8" stroke-width=".8"/><g stroke="#a8b4c4" stroke-width=".9"><path d="M9 8H12M9 10.500H12M9 13H16M9 15.500H16"/></g><rect x="12.500" y="7" width="3.500" height="4" fill="#3a68b8"/></svg>
<svg style="left:49px;top:532px" width="24" height="25" viewBox="0 0 24 25"><path d="M1 19L12 14L23 19L12 24Z" fill="#a8dcf0" stroke="#5aaad8" stroke-width=".9"/><ellipse cx="10.500" cy="15.500" rx="4" ry="3.200" fill="#2a88d8"/><path d="M13.500 15.500V2C15 4 19 5 18 10" fill="none" stroke="#2a88d8" stroke-width="1.800"/></svg>
<svg style="left:49px;top:564px" width="24" height="25" viewBox="0 0 24 25"><path d="M1 19L12 14L23 19L12 24Z" fill="#a8dcf0" stroke="#5aaad8" stroke-width=".9"/><rect x="6" y="2" width="12" height="16" fill="#3a4250"/><rect x="8.500" y="3" width="7" height="14" fill="#6888a8"/><rect x="9" y="6" width="6" height="6" fill="#c87838"/><g fill="#e8e8e8"><rect x="6.600" y="3" width="1.200" height="1.500"/><rect x="6.600" y="6" width="1.200" height="1.500"/><rect x="6.600" y="9" width="1.200" height="1.500"/><rect x="6.600" y="12" width="1.200" height="1.500"/><rect x="6.600" y="15" width="1.200" height="1.500"/><rect x="16.200" y="3" width="1.200" height="1.500"/><rect x="16.200" y="6" width="1.200" height="1.500"/><rect x="16.200" y="9" width="1.200" height="1.500"/><rect x="16.200" y="12" width="1.200" height="1.500"/><rect x="16.200" y="15" width="1.200" height="1.500"/></g></svg>
<div style="left:248.0px;top:136.0px;width:833.0px;height:460.0px;background:linear-gradient(180deg,#f1f5fb 0%,#f8fafd 12%,#fbfbfb 24%)"></div>
<div style="left:271.0px;top:218.5px;width:794.0px;height:1.0px;background:#e4eaf2"></div>
<div style="left:704.5px;top:220.0px;width:1.0px;height:33.0px;background:linear-gradient(180deg,#fdfdfd,#e0e5ec,#fdfdfd)"></div>
<div style="left:899.0px;top:220.0px;width:1.0px;height:33.0px;background:linear-gradient(180deg,#fdfdfd,#e0e5ec,#fdfdfd)"></div>
<svg style="left:481px;top:221px" width="10" height="5" viewBox="0 0 10 5"><path d="M0 5L5 0L10 5Z" fill="#a8c8d8" stroke="#6a98b0" stroke-width=".6"/></svg>
<div style="left:1017.5px;top:172.5px;width:0;height:0;border-style:solid;border-width:4.5px 4.0px 0 4.0px;border-color:#2b6a9a transparent transparent transparent"></div>
<div style="left:271.0px;top:269.0px;width:810.0px;height:31.5px;background:linear-gradient(180deg,#eaf1fb 0%,#d8e4f7 100%);border-top:1px solid #a8bfe0;border-bottom:1px solid #b6cae8;border-left:1px solid #a8bfe0;border-radius:3px 0 0 3px"></div>
<div style="left:271.0px;top:300.5px;width:810.0px;height:32.0px;background:linear-gradient(180deg,#e3ecfa 0%,#cfdef6 100%);border-top:1px solid #9fb8dc;border-bottom:1px solid #a4bce0;border-left:1px solid #9fb8dc;border-radius:3px 0 0 3px"></div>
<svg style="left:278px;top:305px" width="18" height="22" viewBox="0 0 18 22"><path d="M1 3L6 0V21L1 18Z" fill="#e6d36a"/><path d="M6 0L13 2V19L6 21Z" fill="#f5eba6"/><path d="M6 4L16 5V20L6 22Z" fill="#ecdc7e"/></svg>
<div style="left:248.0px;top:596.0px;width:833.0px;height:24.0px;background:#f0f0f0;border-top:1px solid #e8e8e8"></div>
<svg style="left:259px;top:602px" width="6" height="12" viewBox="0 0 6 12"><path d="M6 0L0 6L6 12Z" fill="#404040"/></svg>
<svg style="left:1064px;top:602px" width="6" height="12" viewBox="0 0 6 12"><path d="M0 0L6 6L0 12Z" fill="#404040"/></svg>
<div style="left:277.5px;top:596.5px;width:642.5px;height:23.0px;background:linear-gradient(180deg,#f2f2f2 0%,#e2e2e2 45%,#d2d2d2 50%,#cbcbcb 100%);border:1px solid #979797;border-radius:2px"></div>
<div style="left:591.0px;top:602.5px;width:15.0px;height:11.5px;background:repeating-linear-gradient(90deg,#6e6e6e 0 1.800px,#f6f6f6 1.800px 3px,transparent 3px 4.800px)"></div>
<div style="left:10.0px;top:621.0px;width:1070.0px;height:80.0px;background:linear-gradient(180deg,#f1f4fc,#eef1fb);border-top:1px solid #dde3f0"></div>
<div style="left:10px;top:0;width:209.5px;height:711px;overflow:hidden"><span class="t" style="left:59.0px;top:153.0px;font-size:18px;color:#1e1e1e;letter-spacing:-0.39px;">Favoriten</span>
<span class="t" style="left:69.2px;top:185.0px;font-size:18px;color:#1e1e1e;letter-spacing:-0.19px;">Desktop</span>
<span class="t" style="left:69.2px;top:217.0px;font-size:18px;color:#1e1e1e;letter-spacing:-0.03px;">Downloads</span>
<span class="t" style="left:69.2px;top:249.0px;font-size:18px;color:#1e1e1e;letter-spacing:-0.11px;">Dropbox (Satzkist</span>
<span class="t" style="left:68.5px;top:281.0px;font-size:18px;color:#1e1e1e;letter-spacing:-0.17px;">Zuletzt besucht</span>
<span class="t" style="left:69.2px;top:313.0px;font-size:18px;color:#1e1e1e;letter-spacing:-0.38px;">Projekt_InCopy</span>
<span class="t" style="left:68.5px;top:345.0px;font-size:18px;color:#1e1e1e;letter-spacing:-0.29px;">Creative Cloud File</span>
<span class="t" style="left:69.2px;top:377.0px;font-size:18px;color:#1e1e1e;letter-spacing:0.11px;">InCopy-Aufgaben</span>
<span class="t" style="left:58.6px;top:441.0px;font-size:18px;color:#1e1e1e;letter-spacing:-0.18px;">Bibliotheken</span>
<span class="t" style="left:68.5px;top:473.0px;font-size:18px;color:#1e1e1e;letter-spacing:-0.49px;">Bilder</span>
<span class="t" style="left:68.5px;top:505.0px;font-size:18px;color:#1e1e1e;letter-spacing:-0.01px;">Dokumente</span>
<span class="t" style="left:68.5px;top:537.0px;font-size:18px;color:#1e1e1e;letter-spacing:-0.16px;">Musik</span>
<span class="t" style="left:68.0px;top:569.0px;font-size:18px;color:#1e1e1e;letter-spacing:-0.29px;">Videos</span></div>
<span class="t" style="left:156.5px;top:53.0px;font-size:18px;color:#101010;letter-spacing:-0.21px;">Bibliotheken</span>
<span class="t" style="left:286.0px;top:53.0px;font-size:18px;color:#101010;letter-spacing:0.10px;">Dokumente</span>
<span class="t" style="left:412.0px;top:53.0px;font-size:18px;color:#101010;letter-spacing:0.13px;">InCopy-Aufgaben</span>
<span class="t" style="left:849.0px;top:53.0px;font-size:18px;color:#6e6e6e;letter-spacing:-0.31px;font-style:italic">InCopy-Aufgaben durc...</span>
<span class="t" style="left:38.0px;top:103.0px;font-size:18px;color:#1e3050;letter-spacing:-0.30px;">Organisieren</span>
<span class="t" style="left:229.5px;top:103.0px;font-size:18px;color:#1e3050;letter-spacing:-0.04px;">Öffnen</span>
<span class="t" style="left:330.8px;top:103.0px;font-size:18px;color:#1e3050;letter-spacing:-0.22px;">Freigeben für</span>
<span class="t" style="left:496.0px;top:103.0px;font-size:18px;color:#1e3050;letter-spacing:-0.34px;">E-Mail</span>
<span class="t" style="left:591.0px;top:103.0px;font-size:18px;color:#1e3050;letter-spacing:-0.17px;">Neuer Ordner</span>
<span class="t" style="left:276.4px;top:151.0px;font-size:27px;color:#1e7b35;letter-spacing:0.61px;">Bibliothek &quot;Dokumente&quot;</span>
<span class="t" style="left:809.5px;top:168.0px;font-size:18px;color:#596170;letter-spacing:-0.24px;">Anordnen nach:</span>
<span class="t" style="left:954.5px;top:168.0px;font-size:18px;color:#355c9c;letter-spacing:-0.17px;">Ordner</span>
<span class="t" style="left:714.0px;top:232.0px;font-size:18px;color:#58606c;letter-spacing:0.14px;">Änderungsdatum</span>
<span class="t" style="left:909.0px;top:232.0px;font-size:18px;color:#58606c;letter-spacing:-0.34px;">Typ</span>
<span class="t" style="left:714.0px;top:278.0px;font-size:18px;color:#5b6575;letter-spacing:-0.14px;">10.07.2016 11:35</span>
<span class="t" style="left:909.7px;top:278.0px;font-size:18px;color:#5b6575;letter-spacing:-0.09px;">Dateiordner</span>
<span class="t" style="left:308.0px;top:309.0px;font-size:18px;color:#1e1e1e;letter-spacing:0.29px;">Workflow</span>
<span class="t" style="left:714.0px;top:309.0px;font-size:18px;color:#5b6575;letter-spacing:-0.23px;">09.07.2016 16:13</span>
<span class="t" style="left:909.7px;top:309.0px;font-size:18px;color:#5b6575;letter-spacing:-0.09px;">Dateiordner</span>
<span class="t" style="left:126.5px;top:634.0px;font-size:19px;color:#1a1a1a;letter-spacing:0.80px;">Workflow</span>
<span class="t" style="left:229.6px;top:635.0px;font-size:18px;color:#686868;letter-spacing:-0.01px;">Änderungsdatum:</span>
<span class="t" style="left:381.0px;top:635.0px;font-size:18px;color:#1e1e1e;letter-spacing:-0.32px;">09.07.2016 16:13</span>
<span class="t" style="left:126.5px;top:663.0px;font-size:18px;color:#686868;letter-spacing:-0.05px;">Dateiordner</span>
<svg style="left:41px;top:626px;opacity:1" width="50" height="70" viewBox="0 0 50 70" preserveAspectRatio="none"><defs><linearGradient id="ffa" x1="0" y1="0" x2="1" y2="1"><stop offset="0" stop-color="#f6e98c"/><stop offset="1" stop-color="#ecd25c"/></linearGradient></defs><path d="M1.6 1.600L41.500 8V17L15 17Z" fill="#f4eca6"/><path d="M30 14L47.200 16.500V62.500L30 66Z" fill="#fbfbfb" stroke="#d4d4d4" stroke-width=".7"/><path d="M33.500 26Q33.500 22 38 22.500L43.500 23.500V57.500L33.500 59.500Z" fill="#e6e6e6"/><path d="M15 12.500L31 15.500V66.500L14 62Z" fill="#efefef" stroke="#cfcfcf" stroke-width=".7"/><path d="M17 26L22.500 22L24.500 36L18 38Z" fill="#5a7890"/><path d="M22.500 22L27.500 30L24 33Z" fill="#d8d8d8" stroke="#999" stroke-width=".5"/><g stroke="#8a8a8a" stroke-width="1.100"><path d="M15.500 46L23 49.500M15.500 50L23 53.500M15.500 54L23 57.500"/></g><path d="M24.500 16V64" stroke="#dcdcdc" stroke-width="1.200"/><path d="M1.600 1.600L15.300 12.200L13.800 67.300L1.200 51.700Z" fill="url(#ffa)"/></svg>
<div style="left:255.7px;top:160.7px;width:153.8px;height:155.8px;background:radial-gradient(ellipse 75% 75% at 50% 52%,rgba(226,239,251,.92) 0%,rgba(226,239,251,.86) 55%,rgba(228,240,251,.42) 100%);border:1px solid rgba(255,255,255,.65);box-shadow:0 2px 3px rgba(50,60,80,.5)"></div>
<svg style="left:268.5px;top:161.5px;opacity:0.8" width="110" height="157" viewBox="0 0 50 70" preserveAspectRatio="none"><defs><linearGradient id="ffb" x1="0" y1="0" x2="1" y2="1"><stop offset="0" stop-color="#f6e98c"/><stop offset="1" stop-color="#ecd25c"/></linearGradient></defs><path d="M1.6 1.600L41.500 8V17L15 17Z" fill="#f4eca6"/><path d="M30 14L47.200 16.500V62.500L30 66Z" fill="#fbfbfb" stroke="#d4d4d4" stroke-width=".7"/><path d="M33.500 26Q33.500 22 38 22.500L43.500 23.500V57.500L33.500 59.500Z" fill="#e6e6e6"/><path d="M15 12.500L31 15.500V66.500L14 62Z" fill="#efefef" stroke="#cfcfcf" stroke-width=".7"/><path d="M17 26L22.500 22L24.500 36L18 38Z" fill="#5a7890"/><path d="M22.500 22L27.500 30L24 33Z" fill="#d8d8d8" stroke="#999" stroke-width=".5"/><g stroke="#8a8a8a" stroke-width="1.100"><path d="M15.500 46L23 49.500M15.500 50L23 53.500M15.500 54L23 57.500"/></g><path d="M24.500 16V64" stroke="#dcdcdc" stroke-width="1.200"/><path d="M1.600 1.600L15.300 12.200L13.800 67.300L1.200 51.700Z" fill="url(#ffb)"/></svg>
<span class="t" style="left:277.0px;top:186.0px;font-size:18px;color:transparent;background:linear-gradient(90deg,rgba(90,94,100,.2) 0,rgba(90,94,100,.2) 131px,#6a6a6a 133px);-webkit-background-clip:text;background-clip:text;letter-spacing:0.13px;">InCopy-Aufgaben</span>
<span class="t" style="left:277.0px;top:232.0px;font-size:18px;color:rgba(70,78,92,.16);letter-spacing:-0.00px;">Name</span>
<span class="t" style="left:313.0px;top:278.0px;font-size:18px;color:rgba(70,78,92,.16);letter-spacing:-0.87px;">_backup</span>
<div style="left:347.0px;top:320.4px;width:249.8px;height:28.0px;background:linear-gradient(180deg,#ffffff,#eceef6);border:1px solid #767676;border-radius:3px;box-shadow:1px 1px 2px rgba(0,0,0,.25)"></div>
<svg style="left:353.5px;top:324.5px" width="20" height="19" viewBox="0 0 20 19"><defs><linearGradient id="ar" x1="0" y1="0" x2="0" y2="1"><stop offset="0" stop-color="#2a6ae8"/><stop offset=".5" stop-color="#1a48c8"/><stop offset="1" stop-color="#3a9af0"/></linearGradient></defs><path d="M9 1L19 9.500L9 18L7.500 14L10.500 12H1V7H10.500L7.500 5Z" fill="url(#ar)"/></svg>
<svg style="left:328.5px;top:291.5px" width="17" height="26" viewBox="0 0 14 22"><path d="M1 1V17.500L5 13.800L7.800 20.500L10.400 19.400L7.600 12.800H13Z" fill="#fff" stroke="#000" stroke-width="1.200" stroke-linejoin="round"/></svg>
<span class="t" style="left:379.3px;top:326.0px;font-size:18px;color:#1f2c8a;letter-spacing:-0.45px;">Nach _backup verschieben</span>
</div><!--endwin-->
</div>
</body>
</html>
